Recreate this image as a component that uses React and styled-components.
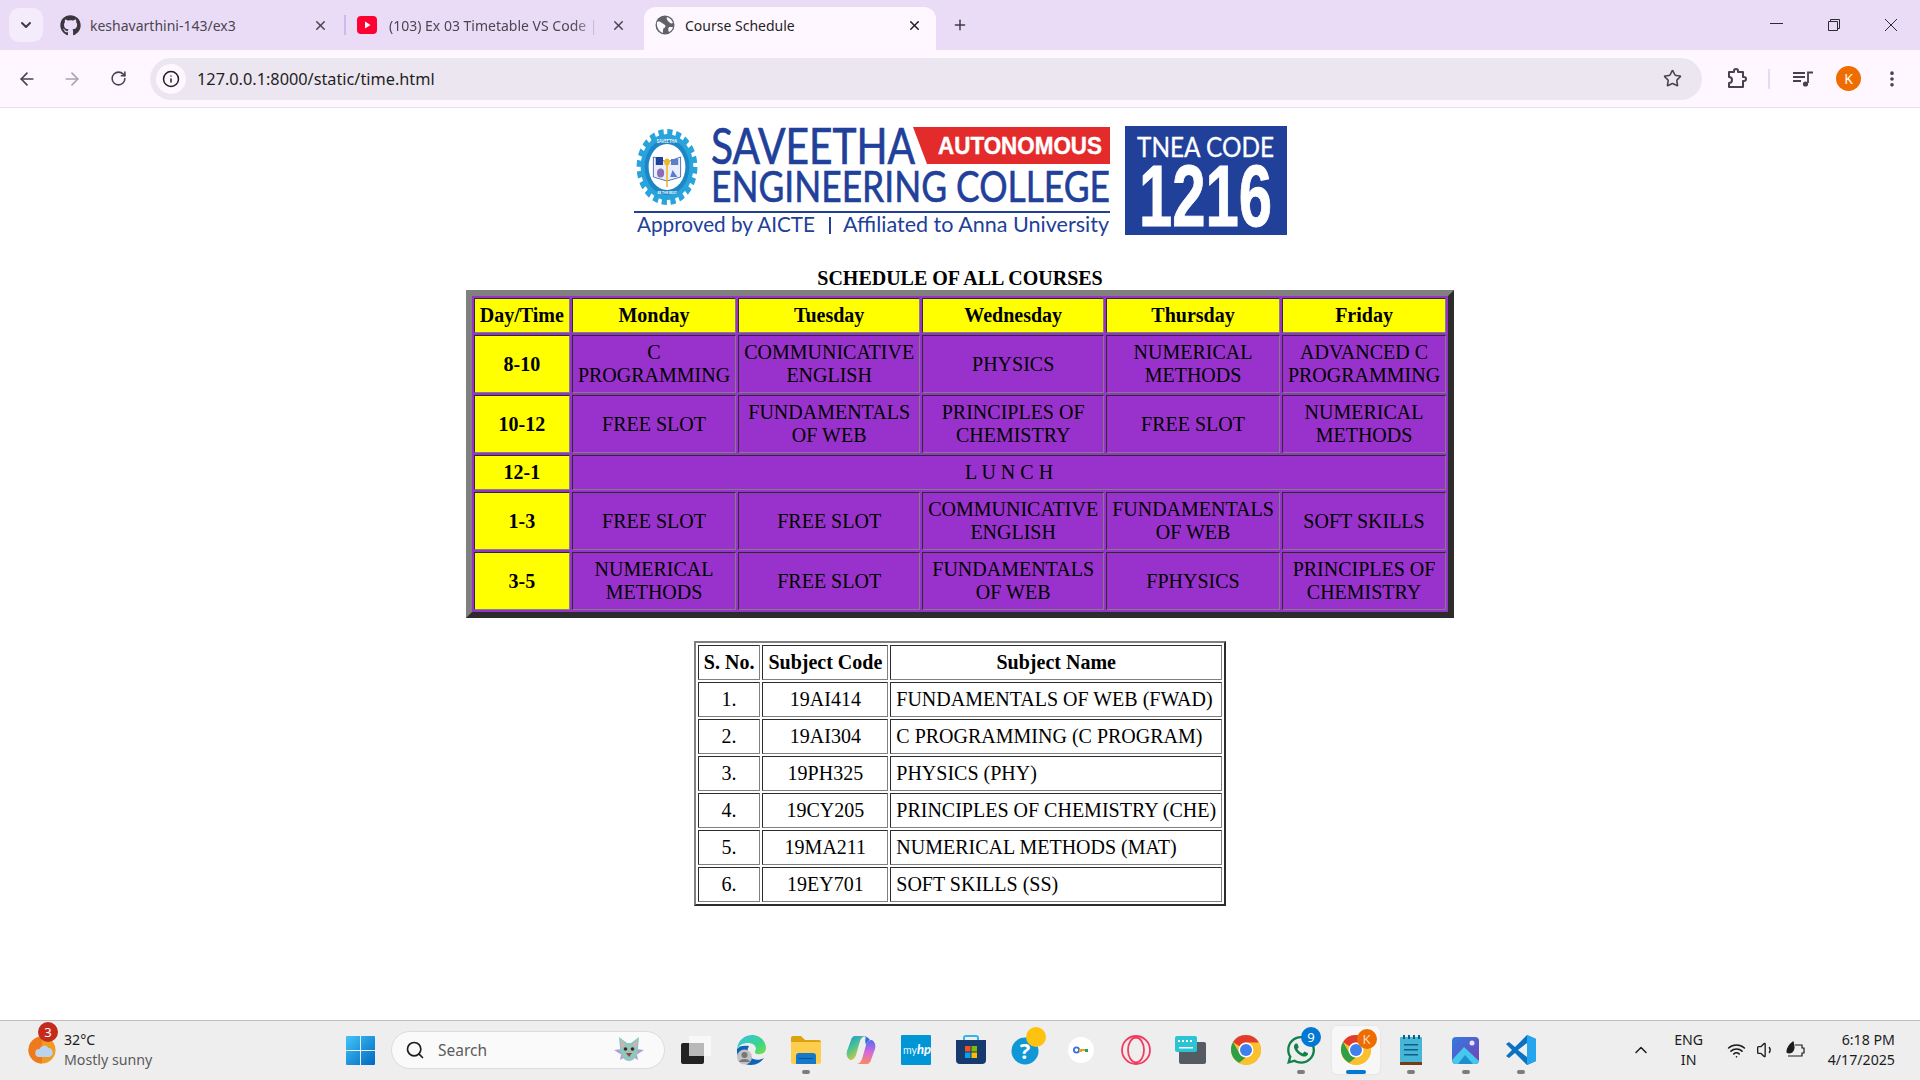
import React from "react";
import styled, { createGlobalStyle } from "styled-components";
import {
	ArrowLeft,
	ArrowRight,
	ChevronDown,
	ChevronUp,
	EllipsisVertical,
	Info,
	Plus,
	RotateCw,
	Search,
	Star,
	Volume1,
	Wifi,
	X
} from "lucide-react";
import { FaGithub, FaWhatsapp } from "react-icons/fa";

//*********************************************************
// Data
//*********************************************************
const DAYS = ["Monday", "Tuesday", "Wednesday", "Thursday", "Friday"];

const SCHEDULE = [
	{ time: "8-10", slots: ["C PROGRAMMING", "COMMUNICATIVE ENGLISH", "PHYSICS", "NUMERICAL METHODS", "ADVANCED C PROGRAMMING"] },
	{ time: "10-12", slots: ["FREE SLOT", "FUNDAMENTALS OF WEB", "PRINCIPLES OF CHEMISTRY", "FREE SLOT", "NUMERICAL METHODS"] },
	{ time: "12-1", lunch: "L U N C H" },
	{ time: "1-3", slots: ["FREE SLOT", "FREE SLOT", "COMMUNICATIVE ENGLISH", "FUNDAMENTALS OF WEB", "SOFT SKILLS"] },
	{ time: "3-5", slots: ["NUMERICAL METHODS", "FREE SLOT", "FUNDAMENTALS OF WEB", "FPHYSICS", "PRINCIPLES OF CHEMISTRY"] }
];

const SUBJECTS = [
	["1.", "19AI414", "FUNDAMENTALS OF WEB (FWAD)"],
	["2.", "19AI304", "C PROGRAMMING (C PROGRAM)"],
	["3.", "19PH325", "PHYSICS (PHY)"],
	["4.", "19CY205", "PRINCIPLES OF CHEMISTRY (CHE)"],
	["5.", "19MA211", "NUMERICAL METHODS (MAT)"],
	["6.", "19EY701", "SOFT SKILLS (SS)"]
];

//*********************************************************
// Styles
//*********************************************************
const GlobalStyle = createGlobalStyle`
	html, body {
		margin: 0;
		padding: 0;
		background: #fff;
		overflow: hidden;
	}
`;

const Screen = styled.div`
	height: 100vh;
	display: flex;
	flex-direction: column;
	overflow: hidden;
	font-family: "Noto Sans", "Open Sans", sans-serif;
`;

const TabStrip = styled.div`
	height: 50px;
	flex: none;
	display: flex;
	align-items: flex-end;
	background: #eadcf6;
	color: #3f3a45;
`;

const TabMenu = styled.div`
	width: 34px;
	height: 34px;
	margin: 0 6px 8px 9px;
	border-radius: 10px;
	background: #f4ebfb;
	display: flex;
	align-items: center;
	justify-content: center;
`;

const Tab = styled.div`
	width: ${(p) => p.$width}px;
	height: 43px;
	flex: none;
	box-sizing: border-box;
	padding: 0 ${(p) => p.$padRight}px 7px ${(p) => p.$padLeft}px;
	display: flex;
	align-items: center;
	position: relative;
	border-radius: 12px 12px 0 0;
	background: ${(p) => (p.$active ? "#fef7ff" : "transparent")};
	color: ${(p) => (p.$active ? "#1f1f1f" : "#4b4650")};
`;

const TabSeparator = styled.div`
	width: 2px;
	height: 20px;
	margin-bottom: 15px;
	flex: none;
	background: #cdb9f0;
`;

const TabTitle = styled.span`
	flex: 1;
	min-width: 0;
	margin: 0 ${(p) => p.$gapRight || 0}px 0 ${(p) => p.$gap}px;
	font-size: 14px;
	white-space: nowrap;
	overflow: hidden;
	mask-image: ${(p) => (p.$fade ? "linear-gradient(90deg, #000 88%, transparent)" : "none")};
`;

const NewTab = styled.div`
	width: 16px;
	margin: 0 0 16px 16px;
	display: flex;
`;

const WindowControls = styled.div`
	margin-left: auto;
	align-self: flex-start;
	display: flex;
	padding: 18px 22px 0 0;
	gap: 43px;
	color: #2c2c2c;
`;

const Toolbar = styled.div`
	height: 57px;
	flex: none;
	display: flex;
	align-items: center;
	background: #fef7ff;
	color: #47434d;
	border-bottom: 1px solid #e3dee8;
`;

const NavButton = styled.div`
	width: ${(p) => p.$width}px;
	margin-left: ${(p) => p.$left || 0}px;
	flex: none;
	display: flex;
	justify-content: center;
	color: ${(p) => (p.$muted ? "#a8a4ad" : "#47434d")};
`;

const AddressBar = styled.div`
	width: 1552px;
	height: 42px;
	flex: none;
	margin: 0 4px;
	box-sizing: border-box;
	padding: 0 20px 0 6px;
	border-radius: 21px;
	background: #ece6f0;
	display: flex;
	align-items: center;
`;

const InfoBadge = styled.div`
	width: 30px;
	height: 30px;
	border-radius: 50%;
	background: #fef7ff;
	color: #1f1f1f;
	display: flex;
	align-items: center;
	justify-content: center;
`;

const Url = styled.span`
	flex: 1;
	margin-left: 11px;
	font-size: 16.3px;
	color: #1f1f1f;
`;

const ToolbarDivider = styled.div`
	width: 2px;
	height: 20px;
	flex: none;
	background: #e6dbf5;
`;

const Avatar = styled.div`
	width: 25px;
	height: 25px;
	flex: none;
	border-radius: 50%;
	background: #ef6c00;
	color: #fff;
	font-size: 14px;
	display: flex;
	align-items: center;
	justify-content: center;
`;

const Page = styled.main`
	flex: 1;
	min-height: 0;
	display: flex;
	flex-direction: column;
	align-items: center;
	background: #fff;
	font-family: "Liberation Serif", "Times New Roman", serif;
	font-size: 20px;
	color: #000;
`;

const Logo = styled.svg`
	display: block;
	width: 653px;
	height: 110px;
	flex: none;
	margin: 18px 0 31px;
`;

const Table = styled.table`
	border-collapse: separate;
	border-spacing: 2px;
	border: ${(p) => p.$border}px outset #808080;
	background: ${(p) => p.$bg};
	margin-top: ${(p) => p.$top || 0}px;
	width: ${(p) => (p.$width ? `${p.$width}px` : "auto")};
	font-size: 20px;
`;

const Caption = styled.caption`
	font-weight: bold;
`;

const Head = styled.th`
	padding: 5px;
	border: 1px inset #808080;
	background: ${(p) => p.$bg || "transparent"};
	font-weight: bold;
`;

const Cell = styled.td`
	padding: 5px;
	border: 1px inset #808080;
	text-align: ${(p) => p.$align || "center"};
	white-space: ${(p) => (p.$nowrap ? "nowrap" : "normal")};
`;

const Taskbar = styled.footer`
	height: 60px;
	flex: none;
	box-sizing: border-box;
	border-top: 1px solid #bfbfbf;
	background: #eeeeee;
	display: flex;
	align-items: center;
	padding: 0 25px 1px 28px;
	color: #1c1c1c;
`;

const Weather = styled.div`
	width: 318px;
	flex: none;
	display: flex;
	align-items: center;
	position: relative;
`;

const WeatherText = styled.div`
	margin-left: 8px;
	font-size: 14.2px;
	line-height: 20px;
`;

const WeatherNote = styled.div`
	color: #5a5a5a;
`;

const CountBadge = styled.div`
	position: absolute;
	left: ${(p) => p.$left}px;
	top: ${(p) => p.$top}px;
	width: 20px;
	height: 20px;
	border-radius: 50%;
	background: ${(p) => p.$bg};
	color: ${(p) => p.$color || "#fff"};
	font-size: 13px;
	display: flex;
	align-items: center;
	justify-content: center;
`;

const SearchBox = styled.div`
	width: 274px;
	height: 38px;
	flex: none;
	box-sizing: border-box;
	margin: 0 3px 0 16px;
	padding: 0 18px 0 13px;
	border: 1px solid #dcdcdc;
	border-radius: 19px;
	background: #fafafa;
	display: flex;
	align-items: center;
	font-size: 15.5px;
	color: #5c5c5c;
`;

const SearchLabel = styled.span`
	flex: 1;
	margin-left: 13px;
`;

const AppSlot = styled.div`
	width: ${(p) => (p.$active ? 48 : 55)}px;
	height: 48px;
	margin: 0 ${(p) => (p.$active ? 3.5 : 0)}px;
	flex: none;
	position: relative;
	display: flex;
	align-items: center;
	justify-content: center;
	border-radius: 5px;
	background: ${(p) => (p.$active ? "#f7f7f7" : "transparent")};
	box-shadow: ${(p) => (p.$active ? "0 0 2px #d8d8d8" : "none")};
`;

const RunDot = styled.div`
	position: absolute;
	bottom: 0;
	left: 50%;
	transform: translateX(-50%);
	width: ${(p) => (p.$active ? 20 : 8)}px;
	height: 4px;
	border-radius: 2px;
	background: ${(p) => (p.$active ? "#0078d4" : "#7c7c7c")};
`;

const Tray = styled.div`
	margin-left: auto;
	display: flex;
	align-items: center;
`;

const TrayLang = styled.div`
	width: 40px;
	margin: 0 18px 0 18px;
	font-size: 14.2px;
	line-height: 20px;
	text-align: center;
`;

const TrayIcons = styled.div`
	display: flex;
	align-items: center;
	gap: 10px;
	margin-right: 22px;
`;

const Clock = styled.div`
	font-size: 14.2px;
	line-height: 20px;
	text-align: right;
`;

//*********************************************************
// Drawings
//*********************************************************
const YoutubeIcon = () => (
	<svg width="20" height="20" viewBox="0 0 20 20">
		<rect y="1" width="20" height="18" rx="4" fill="#ff0033" />
		<path d="M8 6.500 13.500 10 8 13.500z" fill="#fff" />
	</svg>
);

const GlobeIcon = () => (
	<svg width="20" height="20" viewBox="0 0 20 20">
		<circle cx="10" cy="10" r="9.500" fill="#5f6368" />
		<path d="M2 7c2-1 4 0 5 1s2 1 3 2 0 3-1 3-1 3-1 5C5 17 1 13 2 7zM12 2c3 1 5 3 6 6-2 1-3 0-4-1s-3-3-2-5zM14 12h4c-1 3-2 4-4 5-1-1-1-4 0-5z" fill="#fef7ff" />
	</svg>
);

const WinControl = ({ d }) => (
	<svg width="14" height="14" viewBox="0 0 14 14" fill="none" stroke="currentColor" strokeWidth="1">
		<path d={d} />
	</svg>
);

const PuzzleIcon = () => (
	<svg width="21" height="21" viewBox="0 0 21 21" fill="none" stroke="#47434d" strokeWidth="2" strokeLinejoin="round">
		<path d="M2 4h5V3a2 2 0 0 1 4 0v1h5v5h1a2 2 0 0 1 0 4h-1v6H2v-4a2.500 2.500 0 0 0 0-6z" />
	</svg>
);

const MediaIcon = () => (
	<svg width="20" height="20" viewBox="0 0 20 20" fill="none" stroke="#47434d" strokeWidth="1.800">
		<path d="M0 4h12M0 8h12M0 12h8M15 14V3.500h5" />
		<circle cx="12.500" cy="15" r="2.600" fill="#47434d" stroke="none" />
	</svg>
);

const WeatherIcon = () => (
	<svg width="28" height="28" viewBox="0 0 28 28">
		<circle cx="14" cy="14" r="13.500" fill="#f09a1f" />
		<path d="M14 .5A13.500 13.500 0 0 0 14 27.500z" fill="#ee7a1c" />
		<path d="M11 21a4 4 0 0 1 .5-8 5 5 0 0 1 9-1 4.600 4.600 0 0 1 1 9z" fill="#bcd3ee" />
	</svg>
);

const StartIcon = () => (
	<svg width="29" height="29" viewBox="0 0 29 29">
		<defs>
			<linearGradient id="startFill" x1="0" y1="0" x2="1" y2="1">
				<stop offset="0" stopColor="#43c4f8" />
				<stop offset="1" stopColor="#0067c0" />
			</linearGradient>
		</defs>
		<path d="M0 1a1 1 0 0 1 1-1h13v14H0zM15 0h13a1 1 0 0 1 1 1v13H15zM0 15h14v14H1a1 1 0 0 1-1-1zM15 15h14v13a1 1 0 0 1-1 1H15z" fill="url(#startFill)" />
	</svg>
);

const BatIcon = () => (
	<svg width="34" height="28" viewBox="0 0 34 28">
		<path d="M2 14 10 13 8 24l5-3zM32 14l-8-1 2 11-5-3z" fill="#b49ad8" />
		<path d="M7 1l8 6h4l8-6-1 11c0 8-4 13-9 13S8 20 8 12z" fill="#8fc7bd" />
		<path d="M9 4l4 5-3 3zM25 4l-4 5 3 3z" fill="#eba6b2" />
		<circle cx="13.500" cy="13" r="1.800" fill="#4a2620" />
		<circle cx="20.500" cy="13" r="1.800" fill="#4a2620" />
		<path d="M14 17h6l-3 4z" fill="#a33b32" />
	</svg>
);

const TaskViewIcon = () => (
	<svg width="30" height="30" viewBox="0 0 30 30">
		<rect x="0" y="8" width="23" height="21" rx="2" fill="#222" />
		<rect x="8" y="1" width="22" height="20" rx="1" fill="#f8f8f8" />
		<rect x="8" y="8" width="15" height="13" fill="#b9b9b9" />
	</svg>
);

const EdgeIcon = () => (
	<svg width="30" height="30" viewBox="0 0 30 30">
		<defs>
			<linearGradient id="edgeFill" x1="0" y1="0" x2="1" y2="1">
				<stop offset="0" stopColor="#35c1f1" />
				<stop offset="0.6" stopColor="#3bd48a" />
				<stop offset="1" stopColor="#7be04a" />
			</linearGradient>
		</defs>
		<path d="M1 14C2 5 9 0 16 0c8 0 14 6 14 13 0 5-5 7-9 6-3-1-2-3-1-5 0-4-4-6-8-6-5 0-9 2-11 6z" fill="url(#edgeFill)" />
		<path d="M1 14c-1 8 5 16 14 16 6 0 10-3 13-7-5 3-12 2-15-2-2-3-2-7 0-10C7 10 3 11 1 14z" fill="#0c63b8" />
		<circle cx="8.500" cy="22" r="7.500" fill="#c2c2c2" />
		<circle cx="8.500" cy="20" r="3" fill="#777" />
		<path d="M3 27c1-4 10-4 11 0z" fill="#777" />
	</svg>
);

const FolderIcon = () => (
	<svg width="30" height="28" viewBox="0 0 30 28">
		<path d="M0 2a2 2 0 0 1 2-2h8l4 4h14a2 2 0 0 1 2 2v4H0z" fill="#dca30e" />
		<path d="M0 6h30v20a2 2 0 0 1-2 2H2a2 2 0 0 1-2-2z" fill="#fdcd4e" />
		<path d="M5 28v-8a3 3 0 0 1 3-3h14a3 3 0 0 1 3 3v8z" fill="#1479c9" />
		<path d="M8 22h14v1H8z" fill="#0b4d8f" />
	</svg>
);

const CopilotIcon = () => (
	<svg width="30" height="28" viewBox="0 0 30 28">
		<defs>
			<linearGradient id="copLeft" x1="0" y1="0" x2="0.600" y2="1">
				<stop offset="0" stopColor="#1f8fe0" />
				<stop offset="0.5" stopColor="#4cc58f" />
				<stop offset="1" stopColor="#f6c62c" />
			</linearGradient>
			<linearGradient id="copRight" x1="0.500" y1="0" x2="0.400" y2="1">
				<stop offset="0" stopColor="#5a6cf0" />
				<stop offset="0.5" stopColor="#d66ad8" />
				<stop offset="1" stopColor="#fb8a5a" />
			</linearGradient>
		</defs>
		<path d="M9 0h11c-3 0-5 2-6 5L10 19c-1 3-3 5-6 5-3-2-4-5-3-9L5 4c.5-2 2-4 4-4z" fill="url(#copLeft)" />
		<path d="M21 28H10c3 0 5-2 6-5l4-14c1-3 3-5 6-5 3 2 4 5 3 9l-4 11c-.5 2-2 4-4 4z" fill="url(#copRight)" />
		<path d="M20 0h-3c2 0 5 1 7 4-1 .5-3 2-4 5-1-3-1-6 0-9z" fill="#2b6fe0" />
	</svg>
);

const MyHpIcon = () => (
	<svg width="30" height="30" viewBox="0 0 30 30">
		<rect width="30" height="30" rx="1" fill="#0096d6" />
		<text x="2" y="19" fontSize="10.500" fill="#e6f6fd" fontFamily="Lato, sans-serif">my<tspan fontSize="13" fontStyle="italic" fontWeight="700" fill="#fff">hp</tspan></text>
	</svg>
);

const StoreIcon = () => (
	<svg width="30" height="30" viewBox="0 0 30 30">
		<path d="M8 5V3a2 2 0 0 1 2-2h10a2 2 0 0 1 2 2v2" fill="none" stroke="#35b5e8" strokeWidth="2" />
		<path d="M0 5h30v20a4 4 0 0 1-4 4H4a4 4 0 0 1-4-4z" fill="#173a6e" />
		<rect x="9" y="11" width="5.500" height="5.500" fill="#f25022" />
		<rect x="15.500" y="11" width="5.500" height="5.500" fill="#7fba00" />
		<rect x="9" y="17.500" width="5.500" height="5.500" fill="#00a4ef" />
		<rect x="15.500" y="17.500" width="5.500" height="5.500" fill="#ffb900" />
	</svg>
);

const HelpIcon = () => (
	<svg width="30" height="30" viewBox="0 0 30 30">
		<circle cx="14" cy="16" r="13.500" fill="#0f97d6" />
		<text x="14" y="24" textAnchor="middle" fontSize="22" fontWeight="700" fill="#fff" fontFamily="Open Sans, sans-serif">?</text>
	</svg>
);

const KeyIcon = () => (
	<svg width="26" height="26" viewBox="0 0 26 26">
		<circle cx="13" cy="13" r="13" fill="#fff" />
		<circle cx="8.500" cy="13" r="2.600" fill="none" stroke="#3b6fe0" strokeWidth="1.800" />
		<path d="M11 12h8v3h-2v-1h-3v1h-3z" fill="#e2a52a" />
		<path d="M17 12h3v3h-3z" fill="#2f9e5a" />
	</svg>
);

const OperaIcon = () => (
	<svg width="30" height="30" viewBox="0 0 30 30" fill="none" stroke="#f23b5f" strokeWidth="1.800">
		<ellipse cx="15" cy="15" rx="14" ry="14" />
		<ellipse cx="15" cy="15" rx="8" ry="12.500" />
	</svg>
);

const KeyboardIcon = () => (
	<svg width="31" height="29" viewBox="0 0 31 29">
		<rect x="4" y="6" width="27" height="22" rx="2" fill="#555b62" />
		<rect y="0" width="22" height="16" rx="2" fill="#2cc4d4" />
		<path d="M3 4h2v2H3zM7 4h2v2H7zM11 4h2v2h-2zM15 4h2v2h-2zM4 11h14v1.500H4z" fill="#fff" />
	</svg>
);

const ChromeIcon = () => (
	<svg width="30" height="30" viewBox="0 0 30 30">
		<circle cx="15" cy="15" r="15" fill="#fbc02d" />
		<path d="M15 0a15 15 0 0 1 13 7.500H15a7.500 7.500 0 0 0-6.500 3.750L2 7a15 15 0 0 1 13-7z" fill="#e33b2e" />
		<path d="M2 7l6.500 11.250A7.500 7.500 0 0 0 15 22.500L8.500 28A15 15 0 0 1 2 7z" fill="#2f9e44" />
		<path d="M8 28l7-5.500a7.500 7.500 0 0 0 6.500-3.750L28 7.500A15 15 0 0 1 15 30c-2.500 0-5-.7-7-2z" fill="#fbc02d" />
		<circle cx="15" cy="15" r="7.500" fill="#fff" />
		<circle cx="15" cy="15" r="6" fill="#3f7ff0" />
	</svg>
);

const NotepadIcon = () => (
	<svg width="22" height="30" viewBox="0 0 22 30">
		<rect y="2" width="22" height="25" rx="1" fill="#45b6d8" />
		<rect y="27" width="22" height="3" fill="#7a3b12" />
		<path d="M4 9h14v1.500H4zM4 14h14v1.500H4zM4 19h14v1.500H4z" fill="#0f5f80" />
		<path d="M3 0h2v4H3zM8 0h2v4H8zM13 0h2v4h-2zM18 0h2v4h-2z" fill="#0f5f80" />
	</svg>
);

const PhotosIcon = () => (
	<svg width="27" height="27" viewBox="0 0 27 27">
		<defs>
			<linearGradient id="photoFill" x1="0" y1="0" x2="1" y2="1">
				<stop offset="0" stopColor="#2f7de0" />
				<stop offset="1" stopColor="#7a3fb5" />
			</linearGradient>
		</defs>
		<rect width="27" height="27" rx="4" fill="url(#photoFill)" />
		<circle cx="20" cy="6" r="2.500" fill="#e8e4ff" />
		<path d="M0 23 12 10l15 14v-1 0a4 4 0 0 1-4 4H4a4 4 0 0 1-4-4z" fill="#45c8ec" />
		<path d="M6 27l7-9 8 9z" fill="#1d8ecf" />
	</svg>
);

const VsCodeIcon = () => (
	<svg width="30" height="30" viewBox="0 0 30 30">
		<path d="M21 0 30 4v22l-9 4-12-12-6 5-3-2 6-6-6-6 3-2 6 5z" fill="#0a72c0" />
		<path d="M21 0 30 4v22l-9 4z" fill="#25a5ee" />
		<path d="M21 8 12 15l9 7z" fill="#eeeeee" />
	</svg>
);

const BatteryIcon = () => (
	<svg width="20" height="18" viewBox="0 0 20 18" fill="none" stroke="#1c1c1c" strokeWidth="1.200">
		<path d="M2 15h14v-3h2V7h-2V4H9" />
		<path d="M1 11c0-4 2-7 6-10 1 4 2 7-1 10-2 1-4 1-5 0z" fill="#1c1c1c" />
	</svg>
);

const LOGO_BLUE = "#21409a";

const CollegeLogo = () => (
	<Logo viewBox="0 0 653 110">
		<g transform="translate(33 41) scale(0.8 1)">
			<circle r="33" fill="#29a3dc" />
			<circle r="35" fill="none" stroke="#29a3dc" strokeWidth="6" strokeDasharray="6.500 4.500" />
			<circle r="28" fill="#1d86c6" />
			<circle r="23" fill="#fff" />
			<path d="M-17 -10 0 -5 17 -10 17 10 0 14 -17 10z" fill="#e8eefb" stroke={LOGO_BLUE} strokeWidth="0.800" />
			<rect x="-14" y="-10" width="9" height="8" fill={LOGO_BLUE} />
			<circle cx="-8" cy="6" r="4.500" fill="#8a6db5" />
			<path d="M5 -8h9v6H5zM7 3l6 7H4z" fill="#5a7fc8" />
			<path d="M-1 -6h2v26h-2z" fill="#f3b61f" />
			<circle cy="-5" r="3.500" fill="#f3b61f" />
			<text y="-24" textAnchor="middle" fontSize="5" fontWeight="700" fill="#fff" fontFamily="Lato, sans-serif">SAVEETHA</text>
			<text y="27" textAnchor="middle" fontSize="4" fontWeight="700" fill="#fff" fontFamily="Lato, sans-serif">BE THE BEST</text>
		</g>
		<text x="77" y="38" fontSize="50" fill={LOGO_BLUE} stroke={LOGO_BLUE} strokeWidth="0.700" fontFamily="Lato, sans-serif" textLength="204" lengthAdjust="spacingAndGlyphs">SAVEETHA</text>
		<path d="M279 1H476V38H293z" fill="#e32b2b" />
		<text x="304" y="28" fontSize="23" fontWeight="700" fill="#fff" stroke="#fff" strokeWidth="0.400" fontFamily="Liberation Sans, sans-serif" textLength="164" lengthAdjust="spacingAndGlyphs">AUTONOMOUS</text>
		<text x="77" y="76" fontSize="42" fill={LOGO_BLUE} stroke={LOGO_BLUE} strokeWidth="0.600" fontFamily="Lato, sans-serif" textLength="399" lengthAdjust="spacingAndGlyphs">ENGINEERING COLLEGE</text>
		<rect x="0" y="85" width="476" height="2" fill={LOGO_BLUE} />
		<text x="3" y="106" fontSize="21" fill={LOGO_BLUE} fontFamily="Lato, sans-serif" textLength="178" lengthAdjust="spacingAndGlyphs">Approved by AICTE</text>
		<rect x="195" y="91" width="2" height="17" fill={LOGO_BLUE} />
		<text x="209" y="106" fontSize="21" fill={LOGO_BLUE} fontFamily="Lato, sans-serif" textLength="266" lengthAdjust="spacingAndGlyphs">Affiliated to Anna University</text>
		<rect x="491" y="0" width="162" height="109" fill={LOGO_BLUE} />
		<text x="503" y="31" fontSize="26" fill="#fff" stroke="#fff" strokeWidth="0.300" fontFamily="Lato, sans-serif" textLength="137" lengthAdjust="spacingAndGlyphs">TNEA CODE</text>
		<text x="505" y="100" fontSize="87" fontWeight="700" fill="#fff" stroke="#fff" strokeWidth="1" fontFamily="Liberation Sans, sans-serif" textLength="133" lengthAdjust="spacingAndGlyphs">1216</text>
	</Logo>
);

//*********************************************************
// Component
//*********************************************************
const App = () => (
	<Screen>
		<GlobalStyle />

		<TabStrip>
			<TabMenu>
				<ChevronDown size={16} strokeWidth={3} />
			</TabMenu>
			<Tab $width={295} $padLeft={11} $padRight={16}>
				<FaGithub size={21} color="#3a3640" />
				<TabTitle $gap={9}>keshavarthini-143/ex3</TabTitle>
				<X size={15} strokeWidth={2.4} />
			</Tab>
			<TabSeparator />
			<Tab $width={298} $padLeft={11} $padRight={18}>
				<YoutubeIcon />
				<TabTitle $gap={12} $gapRight={12} $fade>(103) Ex 03 Timetable VS Code | Full Stack</TabTitle>
				<X size={15} strokeWidth={2.4} />
			</Tab>
			<Tab $active $width={292} $padLeft={11} $padRight={14}>
				<GlobeIcon />
				<TabTitle $gap={10}>Course Schedule</TabTitle>
				<X size={15} strokeWidth={2.4} />
			</Tab>
			<NewTab>
				<Plus size={18} strokeWidth={2.2} />
			</NewTab>
			<WindowControls>
				<WinControl d="M0 5.500h13" />
				<WinControl d="M1.500 3.500h9v9h-9zM3.500 3.500v-2h9v9h-2" />
				<WinControl d="M1 1l12 12M13 1 1 13" />
			</WindowControls>
		</TabStrip>

		<Toolbar>
			<NavButton $width={54}><ArrowLeft size={20} strokeWidth={2} /></NavButton>
			<NavButton $width={36} $muted><ArrowRight size={20} strokeWidth={2} /></NavButton>
			<NavButton $width={56}><RotateCw size={17} strokeWidth={2.2} /></NavButton>
			<AddressBar>
				<InfoBadge><Info size={18} strokeWidth={2} /></InfoBadge>
				<Url>127.0.0.1:8000/static/time.html</Url>
				<Star size={19} strokeWidth={2} />
			</AddressBar>
			<NavButton $width={62}><PuzzleIcon /></NavButton>
			<ToolbarDivider />
			<NavButton $width={66}><MediaIcon /></NavButton>
			<Avatar>K</Avatar>
			<NavButton $width={56} $left={3}><EllipsisVertical size={20} strokeWidth={2.4} /></NavButton>
		</Toolbar>

		<Page>
			<CollegeLogo />

			<Table $border={6} $bg="#9932cc" $width={987}>
				<Caption>SCHEDULE OF ALL COURSES</Caption>
				<thead>
					<tr>
						<Head $bg="#ffff00">Day/Time</Head>
						{DAYS.map((day) => (
							<Head key={day} $bg="#ffff00">{day}</Head>
						))}
					</tr>
				</thead>
				<tbody>
					{SCHEDULE.map((row) => (
						<tr key={row.time}>
							<Head $bg="#ffff00">{row.time}</Head>
							{row.lunch ? (
								<Cell colSpan={5}>{row.lunch}</Cell>
							) : (
								row.slots.map((slot, i) => <Cell key={i}>{slot}</Cell>)
							)}
						</tr>
					))}
				</tbody>
			</Table>

			<Table $border={2} $bg="#fff" $top={23}>
				<thead>
					<tr>
						<Head>S. No.</Head>
						<Head>Subject Code</Head>
						<Head>Subject Name</Head>
					</tr>
				</thead>
				<tbody>
					{SUBJECTS.map(([no, code, name]) => (
						<tr key={no}>
							<Cell>{no}</Cell>
							<Cell>{code}</Cell>
							<Cell $align="left" $nowrap>{name}</Cell>
						</tr>
					))}
				</tbody>
			</Table>
		</Page>

		<Taskbar>
			<Weather>
				<WeatherIcon />
				<CountBadge $left={10} $top={-8} $bg="#c42b1c">3</CountBadge>
				<WeatherText>
					<div>32°C</div>
					<WeatherNote>Mostly sunny</WeatherNote>
				</WeatherText>
			</Weather>
			<StartIcon />
			<SearchBox>
				<Search size={20} strokeWidth={2} color="#1c1c1c" />
				<SearchLabel>Search</SearchLabel>
				<BatIcon />
			</SearchBox>
			<AppSlot><TaskViewIcon /></AppSlot>
			<AppSlot><EdgeIcon /></AppSlot>
			<AppSlot><FolderIcon /><RunDot /></AppSlot>
			<AppSlot><CopilotIcon /></AppSlot>
			<AppSlot><MyHpIcon /></AppSlot>
			<AppSlot><StoreIcon /></AppSlot>
			<AppSlot>
				<HelpIcon />
				<CountBadge $left={28} $top={1} $bg="#ffc20e" />
			</AppSlot>
			<AppSlot><KeyIcon /></AppSlot>
			<AppSlot><OperaIcon /></AppSlot>
			<AppSlot><KeyboardIcon /></AppSlot>
			<AppSlot><ChromeIcon /></AppSlot>
			<AppSlot>
				<FaWhatsapp size={32} color="#12804a" />
				<CountBadge $left={28} $top={1} $bg="#0078d4">9</CountBadge>
				<RunDot />
			</AppSlot>
			<AppSlot $active>
				<ChromeIcon />
				<CountBadge $left={25} $top={3} $bg="#ef6c00" $color="#ffd9bd">K</CountBadge>
				<RunDot $active />
			</AppSlot>
			<AppSlot><NotepadIcon /><RunDot /></AppSlot>
			<AppSlot><PhotosIcon /><RunDot /></AppSlot>
			<AppSlot><VsCodeIcon /><RunDot /></AppSlot>
			<Tray>
				<ChevronUp size={20} strokeWidth={1.8} />
				<TrayLang>ENG<br />IN</TrayLang>
				<TrayIcons>
					<Wifi size={19} strokeWidth={2} />
					<Volume1 size={20} strokeWidth={1.6} />
					<BatteryIcon />
				</TrayIcons>
				<Clock>6:18 PM<br />4/17/2025</Clock>
			</Tray>
		</Taskbar>
	</Screen>
);

export default App;
